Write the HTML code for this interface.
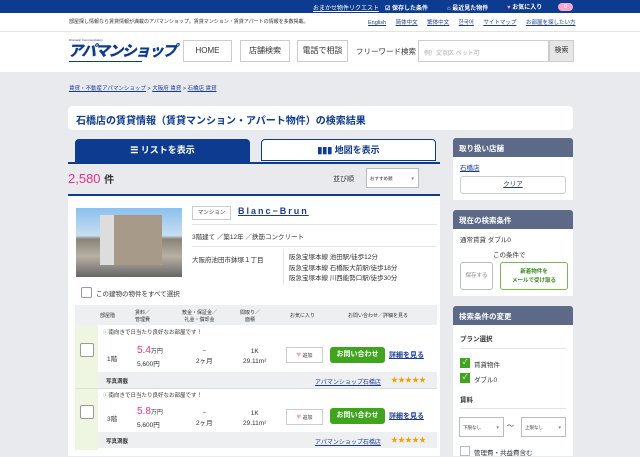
<!DOCTYPE html><html><head><meta charset="utf-8"><style>
*{margin:0;padding:0;box-sizing:border-box}
body{width:640px;height:456px;overflow:hidden;background:#e8eaee;font-family:"Liberation Sans","Noto Sans CJK JP",sans-serif;color:#333;position:relative;font-size:7px}
.a{position:absolute}
a,.lk{color:#1a3b9a;text-decoration:underline}
.btn{position:absolute;background:#fff;border:1px solid #ccc;font-size:8px;text-align:center;color:#333}
.sh{position:absolute;background:#5c6a88;color:#fff;font-weight:bold;font-size:7.5px;padding:5px 6px;border-radius:3px 3px 0 0;left:453px;width:120px;height:19px}
.sb{position:absolute;background:#fff;left:453px;width:120px}
.th{position:absolute;font-size:5px;text-align:center;color:#333}
.cb{position:absolute;width:14px;height:14px;border:1px solid #999;border-radius:2px;background:#fff}
</style></head><body>
<div class="a" style="left:0;top:0;width:640px;height:13px;background:#0c3b8f"></div>
<div class="a lk" style="left:313px;top:3px;font-size:6px;color:#fff">おまかせ物件リクエスト</div>
<div class="a" style="left:385px;top:3px;font-size:6px;color:#fff;font-weight:bold">☑ 保存した条件</div>
<div class="a" style="left:447px;top:3px;font-size:6px;color:#fff;font-weight:bold">⌂ 最近見た物件</div>
<div class="a" style="left:507px;top:2px;font-size:6px;color:#fff;font-weight:bold"><span style="color:#f9c">♥</span> お気に入り</div>
<div class="a" style="left:558px;top:3px;width:15px;height:8px;border-radius:4px;background:#f7a8d0;color:#fff;font-size:5px;text-align:center;line-height:8px">0</div>
<div class="a" style="left:0;top:13px;width:640px;height:19px;background:#fff;border-bottom:1px solid #e3e3e3"></div>
<div class="a" style="left:69px;top:18px;font-size:5px;color:#333">部屋探し情報なら賃貸情報が満載のアパマンショップ。賃貸マンション・賃貸アパートの情報を多数掲載。</div>
<div class="a" style="left:368px;top:18px;font-size:5.5px;word-spacing:8px"><a>English</a> <a>简体中文</a> <a>繁体中文</a> <a>한국어</a> <a>サイトマップ</a> <a>お部屋を探したい方</a></div>
<div class="a" style="left:0;top:32px;width:640px;height:40px;background:#fff"></div>
<div class="a" style="left:69px;top:38px;font-size:3px;color:#1a3b9a">Dramatic Communication</div>
<div class="a" style="left:68px;top:40px;font-size:15px;font-weight:900;color:#0c3b8f;letter-spacing:-1.5px;font-style:italic">アパマンショップ</div>
<div class="a" style="left:69px;top:61px;width:73px;height:1px;background:#0c3b8f"></div>
<div class="btn" style="left:183px;top:40px;width:49px;height:22px;line-height:20px">HOME</div>
<div class="btn" style="left:240px;top:40px;width:50px;height:22px;line-height:20px">店舗検索</div>
<div class="btn" style="left:297px;top:40px;width:51px;height:22px;line-height:20px">電話で相談</div>
<div class="a" style="left:356px;top:46px;font-size:7.5px">フリーワード検索</div>
<div class="a" style="left:418px;top:40px;width:131px;height:22px;border:1px solid #ccc;background:#fff;font-size:6px;color:#aaa;padding:7px 5px">例）文京区 ペット可</div>
<div class="a" style="left:549px;top:40px;width:25px;height:22px;border:1px solid #ccc;background:#e6e6e6;font-size:7px;text-align:center;line-height:20px">検索</div>
<div class="a" style="left:69px;top:84px;font-size:5.5px;color:#333"><a>賃貸・不動産アパマンショップ</a> &gt; <a>大阪府 賃貸</a> &gt; <a>石橋店 賃貸</a></div>
<div class="a" style="left:68px;top:106px;width:505px;height:24px;background:#fff;border-radius:4px;font-size:10px;font-weight:bold;color:#0c3b8f;padding:6px 8px">石橋店の賃貸情報（賃貸マンション・アパート物件）の検索結果</div>
<div class="a" style="left:75px;top:139px;width:175px;height:24px;background:#0c3b8f;border-radius:4px 4px 0 0;color:#fff;font-weight:bold;font-size:9px;text-align:center;line-height:22px">☰ リストを表示</div>
<div class="a" style="left:261px;top:139px;width:175px;height:22px;background:#fff;border:1px solid #0c3b8f;border-radius:4px 4px 0 0;color:#0c3b8f;font-weight:bold;font-size:9px;text-align:center;line-height:20px">▮▮▮ 地図を表示</div>
<div class="a" style="left:68px;top:162px;width:372px;height:2px;background:#0c3b8f"></div>
<div class="a" style="left:68px;top:171px;font-size:13px;color:#e8318b">2,580 <span style="color:#333;font-size:10px;font-weight:bold">件</span></div>
<div class="a" style="left:333px;top:174px;font-size:7px">並び順</div>
<div class="a" style="left:366px;top:168px;width:53px;height:20px;border:1px solid #bbb;background:#fff;font-size:4.5px;padding:7px 3px">おすすめ順<span style="float:right;color:#888">▼</span></div>
<div class="a" style="left:68px;top:194px;width:372px;height:2px;background:#0c3b8f"></div>
<div class="a" style="left:68px;top:196px;width:372px;height:260px;background:#fff"></div>
<div class="a" style="left:76px;top:208px;width:106px;height:69px;background:linear-gradient(180deg,#8cc0ee 0%,#c8def0 40%,#8a8478 45%,#b8b0a4 70%,#666 100%)"></div>
<div class="a" style="left:100px;top:215px;width:62px;height:50px;background:#a79a88;border-left:14px solid #ddd"></div>
<div class="a" style="left:192px;top:206px;width:39px;height:14px;border:1px solid #ccc;font-size:5.5px;text-align:center;line-height:12px">マンション</div>
<div class="a lk" style="left:238px;top:206px;font-size:9px;font-weight:bold;letter-spacing:2px">Blanc−Brun</div>
<div class="a" style="left:192px;top:224px;width:245px;height:1px;background:#e5e5e5"></div>
<div class="a" style="left:192px;top:231px;font-size:6.5px">3階建て ／築12年 ／鉄筋コンクリート</div>
<div class="a" style="left:192px;top:246px;width:245px;height:1px;background:#e5e5e5"></div>
<div class="a" style="left:192px;top:254px;font-size:6.5px">大阪府池田市鉢塚１丁目</div>
<div class="a" style="left:283px;top:249px;width:1px;height:36px;background:#e5e5e5"></div>
<div class="a" style="left:289px;top:253px;font-size:6.5px;line-height:10.5px">阪急宝塚本線 池田駅/徒歩12分<br>阪急宝塚本線 石橋阪大前駅/徒歩18分<br>阪急宝塚本線 川西能勢口駅/徒歩30分</div>
<div class="cb" style="left:81px;top:287px;width:11px;height:11px"></div>
<div class="a" style="left:96px;top:288px;font-size:6.5px">この建物の物件をすべて選択</div>
<div class="a" style="left:75px;top:305px;width:362px;height:20px;background:#eeeff1"></div>
<div class="th" style="left:100px;top:312px">部屋階</div>
<div class="th" style="left:135px;top:309px">賃料／<br>管理費</div>
<div class="th" style="left:182px;top:309px">敷金・保証金／<br>礼金・償却金</div>
<div class="th" style="left:240px;top:309px">間取り／<br>面積</div>
<div class="th" style="left:290px;top:312px">お気に入り</div>
<div class="th" style="left:348px;top:312px">お問い合わせ／詳細を見る</div>
<div class="a" style="left:75px;top:325px;width:23px;height:125px;background:#eef5e1"></div>
<div class="a" style="left:98px;top:372px;width:339px;height:16px;background:#eeeff1"></div>
<div class="a" style="left:98px;top:432px;width:339px;height:16px;background:#eeeff1"></div>
<div class="a" style="left:75px;top:388px;width:362px;height:1px;background:#ddd"></div>
<div class="a" style="left:103px;top:328px;font-size:5.5px"><span style="color:#4a4">ⓘ</span>南向きで日当たり良好なお部屋です！</div>
<div class="cb" style="left:80px;top:343px"></div>
<div class="a" style="left:107px;top:353px;font-size:6.5px">1階</div>
<div class="a" style="left:137px;top:345px;font-size:10px;color:#e8318b">5.4<span style="font-size:6px;color:#333">万円</span></div>
<div class="a" style="left:137px;top:358px;font-size:6.5px">5,600円</div>
<div class="a" style="left:196px;top:347px;font-size:6.5px;text-align:center;line-height:10px">−<br>2ヶ月</div>
<div class="a" style="left:243px;top:347px;font-size:6.5px;text-align:center;line-height:10px">1K<br>29.11m²</div>
<div class="a" style="left:286px;top:347px;width:37px;height:16px;border:1px solid #ccc;font-size:5px;text-align:center;line-height:14px"><span style="color:#f3a3c8;font-size:8px">♥</span> 追加</div>
<div class="a" style="left:330px;top:347px;width:55px;height:16px;background:#3fa51c;border-radius:3px;color:#fff;font-weight:bold;font-size:7px;text-align:center;line-height:16px">お問い合わせ</div>
<div class="a lk" style="left:389px;top:350px;font-size:7px;font-weight:bold">詳細を見る</div>
<div class="a" style="left:106px;top:377px;font-size:5.5px;font-weight:bold">写真満載</div>
<div class="a lk" style="left:315px;top:377px;font-size:6px">アパマンショップ石橋店</div>
<div class="a" style="left:391px;top:375px;font-size:7px;color:#f0a000">★★★★★</div>
<div class="a" style="left:103px;top:391px;font-size:5.5px"><span style="color:#4a4">ⓘ</span>南向きで日当たり良好なお部屋です！</div>
<div class="cb" style="left:80px;top:405px"></div>
<div class="a" style="left:107px;top:413px;font-size:6.5px">3階</div>
<div class="a" style="left:137px;top:406px;font-size:10px;color:#e8318b">5.8<span style="font-size:6px;color:#333">万円</span></div>
<div class="a" style="left:137px;top:419px;font-size:6.5px">5,600円</div>
<div class="a" style="left:196px;top:409px;font-size:6.5px;text-align:center;line-height:10px">−<br>2ヶ月</div>
<div class="a" style="left:243px;top:409px;font-size:6.5px;text-align:center;line-height:10px">1K<br>29.11m²</div>
<div class="a" style="left:286px;top:409px;width:37px;height:16px;border:1px solid #ccc;font-size:5px;text-align:center;line-height:14px"><span style="color:#f3a3c8;font-size:8px">♥</span> 追加</div>
<div class="a" style="left:330px;top:408px;width:55px;height:16px;background:#3fa51c;border-radius:3px;color:#fff;font-weight:bold;font-size:7px;text-align:center;line-height:16px">お問い合わせ</div>
<div class="a lk" style="left:389px;top:411px;font-size:7px;font-weight:bold">詳細を見る</div>
<div class="a" style="left:106px;top:437px;font-size:5.5px;font-weight:bold">写真満載</div>
<div class="a lk" style="left:315px;top:437px;font-size:6px">アパマンショップ石橋店</div>
<div class="a" style="left:391px;top:435px;font-size:7px;color:#f0a000">★★★★★</div>
<div class="sh" style="top:138px">取り扱い店舗</div>
<div class="sb" style="top:157px;height:43px"></div>
<div class="a lk" style="left:460px;top:162px;font-size:6.5px">石橋店</div>
<div class="a" style="left:460px;top:176px;width:106px;height:18px;border:1px solid #ccc;border-radius:3px;background:#fff;text-align:center;line-height:16px;font-size:6.5px"><span class="lk">クリア</span></div>
<div class="sh" style="top:210px">現在の検索条件</div>
<div class="sb" style="top:229px;height:67px"></div>
<div class="a" style="left:460px;top:234px;font-size:6.5px">通常賃貸 ダブル0</div>
<div class="a" style="left:493px;top:249px;font-size:6.5px">この条件で</div>
<div class="a" style="left:460px;top:262px;width:33px;height:28px;border:1px solid #bbb;border-radius:3px;font-size:5.5px;color:#888;text-align:center;line-height:26px">保存する</div>
<div class="a" style="left:500px;top:262px;width:68px;height:28px;border:1px solid #7ab84f;border-radius:3px;font-size:5.5px;color:#3a8a1c;font-weight:bold;text-align:center;line-height:9px;padding-top:5px">新着物件を<br>メールで受け取る</div>
<div class="sh" style="top:306px">検索条件の変更</div>
<div class="sb" style="top:325px;height:131px"></div>
<div class="a" style="left:460px;top:333px;font-size:6.5px;font-weight:bold">プラン選択</div>
<div class="a" style="left:460px;top:348px;width:106px;height:1px;background:#e5e5e5"></div>
<div class="a" style="left:460px;top:358px;width:10px;height:10px;background:#3fa51c;color:#fff;font-size:7px;line-height:10px;text-align:center">✓</div>
<div class="a" style="left:474px;top:359px;font-size:6.5px">賃貸物件</div>
<div class="a" style="left:460px;top:373px;width:10px;height:10px;background:#3fa51c;color:#fff;font-size:7px;line-height:10px;text-align:center">✓</div>
<div class="a" style="left:474px;top:374px;font-size:6.5px">ダブル0</div>
<div class="a" style="left:460px;top:394px;font-size:6.5px;font-weight:bold">賃料</div>
<div class="a" style="left:460px;top:408px;width:106px;height:1px;background:#e5e5e5"></div>
<div class="a" style="left:459px;top:417px;width:45px;height:20px;border:1px solid #bbb;font-size:4.5px;padding:7px 3px">下限なし<span style="float:right;color:#888">▼</span></div>
<div class="a" style="left:507px;top:421px;font-size:7px">〜</div>
<div class="a" style="left:521px;top:417px;width:45px;height:20px;border:1px solid #bbb;font-size:4.5px;padding:7px 3px">上限なし<span style="float:right;color:#888">▼</span></div>
<div class="a" style="left:460px;top:446px;width:10px;height:10px;border:1px solid #bbb"></div>
<div class="a" style="left:474px;top:447px;font-size:6.5px">管理費・共益費含む</div>
</body></html>
